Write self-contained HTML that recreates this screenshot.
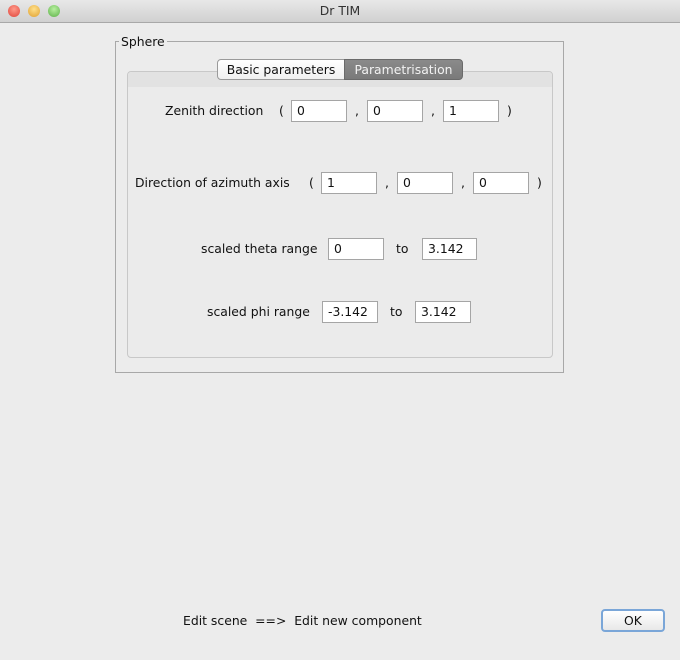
<!DOCTYPE html>
<html><head><style>
body{margin:0;width:680px;height:660px;background:#ececec;font-family:"DejaVu Sans",sans-serif;font-size:12.4px;color:#111;position:relative;overflow:hidden}
.a{position:absolute;white-space:nowrap}
.tb{left:0;top:0;width:680px;height:22px;background:linear-gradient(#e8e8e8,#d0d0d0);border-bottom:1px solid #a8a8a8;text-align:center;line-height:22px;color:#333}
.dot{position:absolute;top:5px;width:12px;height:12px;border-radius:50%}
.f{position:absolute;background:#fff;border:1px solid #a5a5a5;box-sizing:border-box;height:22px;line-height:20px;padding-left:5px}
.t{position:absolute;line-height:16px;white-space:nowrap}
</style></head><body>
<div class="a tb">Dr TIM</div>
<div class="dot" style="left:8px;background:radial-gradient(circle at 50% 35%,#ff9a8a,#e0443a)"></div>
<div class="dot" style="left:28px;background:radial-gradient(circle at 50% 35%,#ffe08a,#e0a030)"></div>
<div class="dot" style="left:48px;background:radial-gradient(circle at 50% 35%,#b8f0a0,#5cb048)"></div>
<div class="a" style="left:115px;top:41px;width:447px;height:330px;border:1px solid #a8a8a8"></div>
<div class="t" style="left:119px;top:34px;background:#ececec;padding:0 2px">Sphere</div>
<div class="a" style="left:127px;top:71px;width:424px;height:285px;border:1px solid #c8c8c8;border-radius:4px;background:#ebebeb"></div>
<div class="a" style="left:128px;top:72px;width:424px;height:15px;background:#e2e2e2;border-radius:4px 4px 0 0"></div>
<div class="a" style="left:217px;top:59px;width:126px;height:19px;border:1px solid #9a9a9a;border-radius:4px 0 0 4px;background:linear-gradient(#fff,#f0f0f0);text-align:center;line-height:19px">Basic parameters</div>
<div class="a" style="left:344px;top:59px;width:117px;height:19px;border:1px solid #6a6a6a;border-radius:0 4px 4px 0;background:linear-gradient(#8a8a8a,#7a7a7a);text-align:center;line-height:19px;color:#f2f2f2">Parametrisation</div>

<div class="t" style="left:165px;top:103px">Zenith direction</div>
<div class="t" style="left:279px;top:103px">(</div>
<div class="f" style="left:291px;top:100px;width:56px">0</div>
<div class="t" style="left:355px;top:103px">,</div>
<div class="f" style="left:367px;top:100px;width:56px">0</div>
<div class="t" style="left:431px;top:103px">,</div>
<div class="f" style="left:443px;top:100px;width:56px">1</div>
<div class="t" style="left:507px;top:103px">)</div>

<div class="t" style="left:135px;top:175px">Direction of azimuth axis</div>
<div class="t" style="left:309px;top:175px">(</div>
<div class="f" style="left:321px;top:172px;width:56px">1</div>
<div class="t" style="left:385px;top:175px">,</div>
<div class="f" style="left:397px;top:172px;width:56px">0</div>
<div class="t" style="left:461px;top:175px">,</div>
<div class="f" style="left:473px;top:172px;width:56px">0</div>
<div class="t" style="left:537px;top:175px">)</div>

<div class="t" style="left:201px;top:241px">scaled theta range</div>
<div class="f" style="left:328px;top:238px;width:56px">0</div>
<div class="t" style="left:396px;top:241px">to</div>
<div class="f" style="left:422px;top:238px;width:55px">3.142</div>

<div class="t" style="left:207px;top:304px">scaled phi range</div>
<div class="f" style="left:322px;top:301px;width:56px">-3.142</div>
<div class="t" style="left:390px;top:304px">to</div>
<div class="f" style="left:415px;top:301px;width:56px">3.142</div>

<div class="t" style="left:183px;top:613px">Edit scene &nbsp;==&gt; &nbsp;Edit new component</div>
<div class="a" style="left:601px;top:609px;width:60px;height:19px;border:2px solid #7aa6d8;border-radius:4px;background:linear-gradient(#fff,#e8e8e8);text-align:center;line-height:19px">OK</div>
</body></html>
